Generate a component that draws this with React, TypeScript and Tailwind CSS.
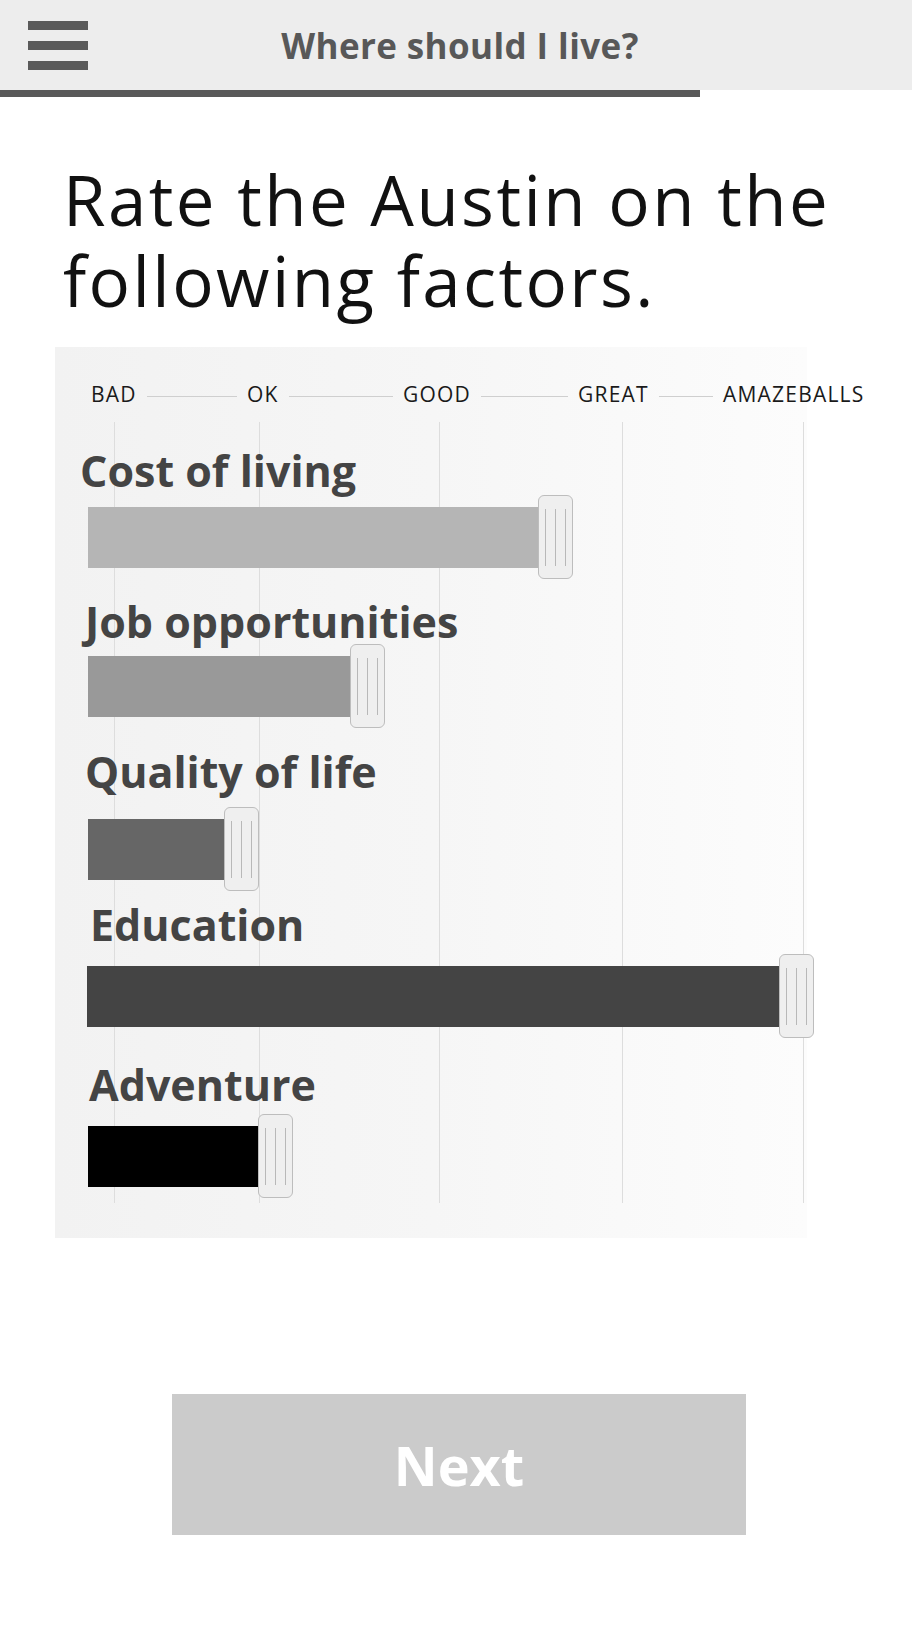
import React from 'react';

type Factor = {
  name: string;
  color: string;
  width: number;
  labelMt: number;
  barMt: number;
  labelMl: number;
  barMl: number;
};

const factors: Factor[] = [
  { name: 'Cost of living', color: 'bg-[#b5b5b5]', width: 450, labelMt: 44, barMt: 3, labelMl: 25, barMl: 33 },
  { name: 'Job opportunities', color: 'bg-[#999999]', width: 262, labelMt: 21, barMt: 1, labelMl: 30, barMl: 33 },
  { name: 'Quality of life', color: 'bg-[#666666]', width: 136, labelMt: 22, barMt: 14, labelMl: 30, barMl: 33 },
  { name: 'Education', color: 'bg-[#444444]', width: 692, labelMt: 12, barMt: 8, labelMl: 35, barMl: 32 },
  { name: 'Adventure', color: 'bg-black', width: 170, labelMt: 25, barMt: 8, labelMl: 34, barMl: 33 },
];

// label + the line that runs to the next label
const scale = [
  { label: 'BAD', w: 156 },
  { label: 'OK', w: 156 },
  { label: 'GOOD', w: 175 },
  { label: 'GREAT', w: 145 },
];

const gridLines = [59, 204, 384, 567, 748];

function Handle() {
  return (
    <div className="flex h-[84px] w-[35px] shrink-0 items-center justify-center gap-[9px] rounded-[6px] border border-[#bdbdbd] bg-[#efefef]">
      <div className="h-[57px] w-px bg-[#b8b8b8]" />
      <div className="h-[57px] w-px bg-[#b8b8b8]" />
      <div className="h-[57px] w-px bg-[#b8b8b8]" />
    </div>
  );
}

export default function App() {
  return (
    <div className="min-h-[1630px] w-full overflow-hidden bg-white font-['Open_Sans',sans-serif]">
      {/* top bar */}
      <header className="flex h-[90px] items-center bg-[#ededed]">
        <div className="flex w-[88px] flex-col gap-[11px] pl-[28px]">
          <div className="h-[9px] w-[60px] bg-[#5a5a5a]" />
          <div className="h-[9px] w-[60px] bg-[#5a5a5a]" />
          <div className="h-[9px] w-[60px] bg-[#5a5a5a]" />
        </div>
        <h1 className="flex-1 text-center text-[35px] leading-[35px] font-bold tracking-[0.4px] text-[#585858]">
          Where should I live?
        </h1>
        <div className="w-[80px]" />
      </header>
      <div className="h-[7px] w-[700px] bg-[#595959]" />

      <h2 className="mt-[62px] pl-[63px] text-[69px] leading-[81px] tracking-[2.4px] text-[#111111]">
        Rate the Austin on the
        <br />
        following factors.
      </h2>

      {/* rating panel */}
      <section className="relative mt-[26px] ml-[55px] w-[752px] bg-linear-to-r from-[#f2f2f2] via-[#f6f6f6] to-[#fcfcfc] pt-[37px] pb-[40px]">
        {gridLines.map((x) => (
          <div
            key={x}
            className="absolute top-[75px] bottom-[35px] w-px bg-[#dddddd]"
            style={{ left: x }}
          />
        ))}

        <div className="relative flex h-[21px] items-center pl-[36px] text-[21px] leading-[21px] tracking-[1.2px] text-[#1a1a1a]">
          {scale.map((s) => (
            <div key={s.label} className="flex shrink-0 items-center" style={{ width: s.w }}>
              <span>{s.label}</span>
              <div className="mx-[10px] mt-[3px] h-px flex-1 bg-[#cfcfcf]" />
            </div>
          ))}
          <span className="shrink-0">AMAZEBALLS</span>
        </div>

        {factors.map((f) => (
          <div key={f.name} className="relative">
            <div
              className="text-[43px] leading-[43px] font-bold text-[#444444]"
              style={{ marginTop: f.labelMt, marginLeft: f.labelMl }}
            >
              {f.name}
            </div>
            <div className="flex h-[84px] items-center" style={{ marginTop: f.barMt, marginLeft: f.barMl }}>
              <div className={`h-[61px] shrink-0 ${f.color}`} style={{ width: f.width }} />
              <Handle />
            </div>
          </div>
        ))}
      </section>

      <button className="mt-[156px] ml-[172px] flex h-[141px] w-[574px] items-center justify-center bg-[#cbcbcb] text-[54px] leading-[54px] font-bold text-white">
        Next
      </button>
    </div>
  );
}
